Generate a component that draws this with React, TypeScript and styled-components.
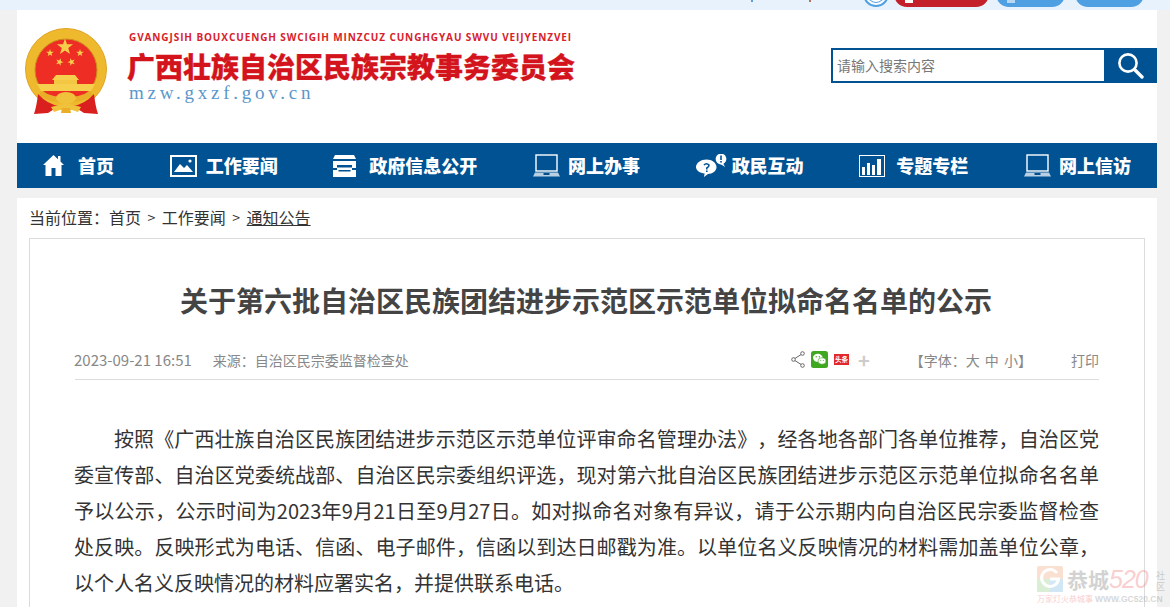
import React from "react";
import styled, { createGlobalStyle } from "styled-components";

const CJK = `"Noto Sans CJK SC", "Noto Sans", sans-serif`;
const BLUE = "#005293";

const Global = createGlobalStyle`
  html, body { margin: 0; padding: 0; height: 607px; overflow: hidden; background: #f1f1f1; }
  body { font-family: ${CJK}; }
  * { box-sizing: border-box; }
`;

const Page = styled.div`
  position: relative;
  height: 607px;
  overflow: hidden;
`;

const TopBar = styled.div`
  height: 10px;
  background: #e8f2fd;
  overflow: hidden;
  display: flex;
  align-items: flex-end;
  padding: 0 25px 3px 751px;
`;

const TopTick = styled.span<{ $mr: number; $c: string }>`
  width: 2px;
  height: 2px;
  margin-right: ${(p) => p.$mr}px;
  background: ${(p) => p.$c};
  align-self: flex-start;
`;

const TopCircle = styled.span`
  width: 26px;
  height: 26px;
  flex: none;
  border-radius: 50%;
  background: #fff;
  border: 2px solid #4f9fe3;
  box-shadow: inset 0 0 0 2px #fff, inset 0 0 0 3px #4f9fe3;
  margin-right: 5px;
`;

const TopPill = styled.span<{ $w: number; $c: string; $mr: number }>`
  position: relative;
  width: ${(p) => p.$w}px;
  height: 26px;
  flex: none;
  border-radius: 13px;
  background: ${(p) => p.$c};
  margin-right: ${(p) => p.$mr}px;
  &::after {
    content: "";
    position: absolute;
    left: 11px;
    bottom: 4px;
    width: 8px;
    height: 3px;
    background: #fff;
    opacity: ${(p) => (p.$w === 95 ? 1 : 0.6)};
  }
`;

const PlainPill = styled(TopPill)`
  &::after {
    display: none;
  }
`;

const Shell = styled.div`
  width: 1140px;
  margin-left: 17px;
`;

const Header = styled.header`
  height: 133px;
  background: #fff;
  display: flex;
  align-items: flex-start;
  padding: 18px 0 0 8px;
`;

const Emblem = styled.svg`
  width: 82px;
  height: 90px;
  flex: none;
`;

const Brand = styled.div`
  margin-left: 22px;
  display: flex;
  flex-direction: column;
  width: 460px;
`;

const BrandLatin = styled.div`
  font-family: "Open Sans", "Liberation Sans", sans-serif;
  font-size: 10px;
  font-weight: 700;
  line-height: 14px;
  letter-spacing: 0.9px;
  color: #d7222b;
  white-space: nowrap;
  margin-top: 2px;
`;

const BrandTitle = styled.div`
  font-size: 28px;
  font-weight: 900;
  line-height: 32px;
  color: #d3141c;
  margin: 6px 0 0 -2px;
  white-space: nowrap;
  -webkit-text-stroke: 0.3px #d3141c;
`;

const BrandUrl = styled.div`
  font-family: "Liberation Serif", serif;
  font-size: 19px;
  line-height: 22px;
  letter-spacing: 3.75px;
  color: #5a97c9;
  white-space: nowrap;
`;

const Search = styled.div`
  margin-left: auto;
  margin-top: 20px;
  width: 326px;
  height: 35px;
  display: flex;
  border: 2px solid ${BLUE};
  border-right: 0;
  background: #fff;
`;

const SearchHint = styled.div`
  flex: 1;
  font-size: 14px;
  line-height: 31px;
  padding-left: 4px;
  color: #777;
`;

const SearchButton = styled.div`
  width: 53px;
  background: ${BLUE};
  display: flex;
  align-items: center;
  justify-content: center;
`;

const Nav = styled.nav`
  height: 45px;
  background: ${BLUE};
  display: flex;
  align-items: center;
  justify-content: space-between;
  padding: 0 26px;
`;

const NavItem = styled.a<{ $gap: number }>`
  display: flex;
  align-items: center;
  gap: ${(p) => p.$gap}px;
  color: #fff;
  font-size: 18px;
  font-weight: 900;
  line-height: 45px;
  white-space: nowrap;
`;

const Content = styled.main`
  margin-top: 10px;
  background: #fff;
  padding: 0 12px;
  height: 420px;
`;

const Crumbs = styled.div`
  height: 40px;
  padding-bottom: 2px;
  display: flex;
  align-items: center;
  font-size: 16px;
  color: #333;
  white-space: nowrap;
  text-spacing-trim: space-all;
`;

const CrumbSep = styled.span`
  margin: 0 6.5px;
  font-size: 14px;
`;

const CrumbCurrent = styled.span`
  text-decoration: underline;
`;

const Card = styled.article`
  border: 1px solid #dcdcdc;
  padding: 0 45px;
  height: 400px;
`;

const Title = styled.h1`
  margin: 0;
  padding: 40px 2px 0 0;
  font-size: 28px;
  font-weight: 700;
  line-height: 42px;
  text-align: center;
  color: #444;
`;

const Meta = styled.div`
  margin-top: 21px;
  height: 38px;
  padding-bottom: 2px;
  display: flex;
  align-items: center;
  border-bottom: 1px solid #dcdcdc;
  font-size: 14px;
  color: #888;
  text-spacing-trim: space-all;
`;

const MetaDate = styled.span`
  font-size: 15px;
  margin: 0 21px 0 -1px;
`;

const MetaSource = styled.span`
  font-size: 14px;
`;

const ShareIcons = styled.div`
  margin-left: auto;
  display: flex;
  align-items: center;
  gap: 6px;
`;

const Plus = styled.span`
  font-size: 20px;
  line-height: 18px;
  font-weight: 700;
  color: #ccc;
  margin-left: 3px;
`;

const FontTools = styled.span`
  margin-left: 40px;
  font-size: 14px;
  word-spacing: 2px;
`;

const PrintLink = styled.span`
  margin-left: 39px;
  font-size: 14px;
`;

const Body = styled.p`
  margin: 41px 0 0 -1px;
  font-size: 20px;
  line-height: 36px;
  text-indent: 40px;
  text-align: justify;
  color: #333;
  text-spacing-trim: space-all;
`;

const Watermark = styled.div`
  position: absolute;
  right: 5px;
  bottom: 3px;
  width: 128px;
  height: 38px;
  opacity: 0.32;
  display: grid;
  grid-template-columns: 26px 1fr 9px;
  grid-template-rows: 27px 11px;
  column-gap: 4px;
`;

const MarkMain = styled.div`
  display: flex;
  align-items: center;
  font-size: 21px;
  line-height: 27px;
  font-weight: 700;
  color: #777;
  white-space: nowrap;
`;

const MarkNum = styled.span`
  font-family: "Liberation Sans", sans-serif;
  font-style: italic;
  font-weight: 400;
  font-size: 25px;
  line-height: 27px;
  color: #ee6d70;
  letter-spacing: -1px;
`;

const MarkSide = styled.div`
  font-size: 9px;
  line-height: 11px;
  color: #777;
  padding-top: 4px;
`;

const MarkFoot = styled.div`
  grid-column: 1 / span 3;
  font-size: 8px;
  line-height: 11px;
  white-space: nowrap;
  color: #e66;
`;

const MarkFootUrl = styled.span`
  font-family: "Liberation Sans", sans-serif;
  font-weight: 700;
  font-size: 8.5px;
  color: #888;
  margin-left: 2px;
`;

const EmblemArt = () => {
  const star = (cx: number, cy: number, r: number, rot = 0) => {
    const pts: string[] = [];
    for (let i = 0; i < 10; i++) {
      const a = ((-90 + rot + i * 36) * Math.PI) / 180;
      const rr = i % 2 ? r * 0.4 : r;
      pts.push(`${(cx + rr * Math.cos(a)).toFixed(2)},${(cy + rr * Math.sin(a)).toFixed(2)}`);
    }
    return <polygon points={pts.join(" ")} fill="#f6cf4a" />;
  };
  return (
    <Emblem viewBox="0 0 82 90">
      <circle cx="41" cy="41" r="40.5" fill="#efb92e" stroke="#dfa324" strokeWidth="1" />
      <circle cx="41" cy="42" r="31" fill="#ee2d24" stroke="#c98f1a" strokeWidth="1" />
      {star(40, 19, 8.5)}
      {star(25, 25, 4)}
      {star(55, 25, 4)}
      {star(34.5, 34, 4, 20)}
      {star(46.5, 34, 4, -20)}
      <path d="M31 47 H50 L54 52 H27 Z" fill="#f6cf4c" />
      <rect x="29" y="52" width="23" height="4" fill="#f3c644" />
      <path d="M12 56 H70 L66 63 H16 Z" fill="#f6cf4c" />
      <path d="M16 63 Q41 76 66 63 L68 68 Q41 82 14 68 Z" fill="#e9ad27" />
      <path d="M13 66 C12 74 11 80 9 86 L23 85 L34 78 Q22 76 13 66 Z" fill="#d9201f" />
      <path d="M69 66 C70 74 71 80 73 86 L59 85 L48 78 Q60 76 69 66 Z" fill="#d9201f" />
      <ellipse cx="41" cy="70" rx="10" ry="6" fill="#f0c23c" />
      <path d="M26 79 L38 76 H44 L56 79 L53 84 L44 81 H38 L29 84 Z" fill="#f0c23c" />
      <path d="M37 80 H45 L46 85 H36 Z" fill="#e9ad27" />
    </Emblem>
  );
};

const HomeIcon = () => (
  <svg width="21" height="21" viewBox="0 0 21 21" fill="#fff">
    <path d="M10.5 0 L15 4.2 V1 H17.5 V6.6 L21 10 H18.5 V21 H12.5 V13 H8.5 V21 H2.5 V10 H0 Z" />
  </svg>
);

const PictureIcon = () => (
  <svg width="27" height="22" viewBox="0 0 27 22">
    <rect x="1" y="1" width="25" height="20" fill="none" stroke="#fff" strokeWidth="2" />
    <path d="M4 17 L10 9 L14 13 L17 10 L23 17 Z" fill="#fff" />
    <circle cx="20" cy="6" r="1.6" fill="#fff" />
  </svg>
);

const PrinterIcon = () => (
  <svg width="23" height="22" viewBox="0 0 23 22" fill="#fff">
    <path d="M2 0 H21 L23 4 H0 Z" />
    <path d="M0 6 H23 V13 H19 V10 H4 V13 H0 Z" />
    <path d="M0 15 H4 V12.5 H19 V15 H23 V22 H0 Z M5.5 15 V16.5 H17.5 V15 Z" />
  </svg>
);

const LaptopIcon = () => (
  <svg width="27" height="23" viewBox="0 0 27 23">
    <rect x="3" y="1" width="21" height="16" fill="none" stroke="#fff" strokeWidth="1.4" />
    <path d="M2 18.5 H25 L27 22.5 H0 Z" fill="#b9cfe3" />
    <rect x="10.5" y="19" width="6" height="2" fill="#00508f" />
  </svg>
);

const ChatIcon = () => (
  <svg width="31" height="23" viewBox="0 0 31 23">
    <path d="M10.5 5.5 C16 5.5 20.5 9 20.5 13 C20.5 17 16.5 20 12 20 L8 23 L8.6 19.6 C4 19 0 16.5 0 13 C0 9 5 5.5 10.5 5.5 Z" fill="#fff" />
    <circle cx="25" cy="5" r="5.4" fill="#fff" />
    <path d="M27 9 L29 13 L24.5 10 Z" fill="#fff" />
    <path d="M8 11 Q10.5 8.5 13 11 Q13 13 10.8 14 V15.5 M10.8 16.5 V18" fill="none" stroke={BLUE} strokeWidth="1.6" />
    <rect x="24.2" y="1.5" width="1.6" height="4.5" fill={BLUE} />
    <rect x="24.2" y="7" width="1.6" height="1.6" fill={BLUE} />
  </svg>
);

const ChartIcon = () => (
  <svg width="26" height="22" viewBox="0 0 26 22" fill="#fff">
    <rect x="0.5" y="0.5" width="25" height="21" fill="none" stroke="#fff" />
    <rect x="3" y="12" width="3" height="8" />
    <rect x="8" y="8" width="3" height="12" />
    <rect x="13" y="10" width="3" height="10" />
    <rect x="18" y="4" width="4" height="16" />
  </svg>
);

const ShareIcon = () => (
  <svg width="14" height="17" viewBox="0 0 14 17" fill="none" stroke="#666" strokeWidth="1">
    <circle cx="2.5" cy="8.5" r="1.8" />
    <circle cx="11.5" cy="2.5" r="1.8" />
    <circle cx="11.5" cy="14.5" r="1.8" />
    <path d="M4 7.4 L10 3.6 M4 9.6 L10 13.4" />
  </svg>
);

const WechatIcon = () => (
  <svg width="17" height="17" viewBox="0 0 17 17">
    <rect width="17" height="17" rx="2.5" fill="#3fa821" />
    <ellipse cx="6.8" cy="6.8" rx="4.8" ry="4" fill="#fff" />
    <ellipse cx="11" cy="10" rx="4" ry="3.3" fill="#fff" stroke="#3fa821" strokeWidth="0.6" />
    <circle cx="5.2" cy="5.8" r="0.7" fill="#3fa821" />
    <circle cx="8.4" cy="5.8" r="0.7" fill="#3fa821" />
    <circle cx="9.8" cy="9.5" r="0.5" fill="#3fa821" />
    <circle cx="12.3" cy="9.5" r="0.5" fill="#3fa821" />
  </svg>
);

const ToutiaoIcon = () => (
  <svg width="15" height="11" viewBox="0 0 15 11">
    <rect width="15" height="11" fill="#e3262b" />
    <text x="7.5" y="8.2" fontSize="6.6" fontWeight="700" textAnchor="middle" fill="#fff" fontFamily="Noto Sans CJK SC">头条</text>
  </svg>
);

const SearchIcon = () => (
  <svg width="27" height="27" viewBox="0 0 27 27" fill="none" stroke="#fff">
    <circle cx="11" cy="11" r="8.6" strokeWidth="2.6" />
    <path d="M17.5 17.5 L25 25" strokeWidth="3.4" strokeLinecap="round" />
  </svg>
);

const MarkLogo = () => (
  <svg width="26" height="26" viewBox="0 0 26 26">
    <rect width="26" height="26" rx="2" fill="#f0a070" />
    <path d="M13 13 H26 V26 H13 Z" fill="#72b8e2" />
    <path d="M0 13 H13 V26 H0 Z" fill="#8fcb82" />
    <path d="M20 7 A8.5 8.5 0 1 0 21.5 13 H13" fill="none" stroke="#fff" strokeWidth="3" />
  </svg>
);

const navItems: { label: string; gap: number; icon: React.ReactNode }[] = [
  { label: "首页", gap: 14, icon: <HomeIcon /> },
  { label: "工作要闻", gap: 9, icon: <PictureIcon /> },
  { label: "政府信息公开", gap: 13, icon: <PrinterIcon /> },
  { label: "网上办事", gap: 8, icon: <LaptopIcon /> },
  { label: "政民互动", gap: 5, icon: <ChatIcon /> },
  { label: "专题专栏", gap: 11, icon: <ChartIcon /> },
  { label: "网上信访", gap: 8, icon: <LaptopIcon /> },
];

export default function App() {
  return (
    <Page>
      <Global />
      <TopBar>
        <TopTick $mr={56} $c="#5b9bd8" />
        <TopTick $mr={52} $c="#b4735a" />
        <TopCircle />
        <TopPill $w={95} $c="#c4202b" $mr={7} />
        <TopPill $w={69} $c="#4f9fe3" $mr={10} />
        <PlainPill $w={69} $c="#4f9fe3" $mr={0} />
      </TopBar>
      <Shell>
        <Header>
          <EmblemArt />
          <Brand>
            <BrandLatin>GVANGJSIH BOUXCUENGH SWCIGIH MINZCUZ CUNGHGYAU SWVU VEIJYENZVEI</BrandLatin>
            <BrandTitle>广西壮族自治区民族宗教事务委员会</BrandTitle>
            <BrandUrl>mzw.gxzf.gov.cn</BrandUrl>
          </Brand>
          <Search>
            <SearchHint>请输入搜索内容</SearchHint>
            <SearchButton>
              <SearchIcon />
            </SearchButton>
          </Search>
        </Header>
        <Nav>
          {navItems.map((n) => (
            <NavItem key={n.label} $gap={n.gap}>
              {n.icon}
              {n.label}
            </NavItem>
          ))}
        </Nav>
        <Content>
          <Crumbs>
            当前位置：首页
            <CrumbSep>&gt;</CrumbSep>
            工作要闻
            <CrumbSep>&gt;</CrumbSep>
            <CrumbCurrent>通知公告</CrumbCurrent>
          </Crumbs>
          <Card>
            <Title>关于第六批自治区民族团结进步示范区示范单位拟命名名单的公示</Title>
            <Meta>
              <MetaDate>2023-09-21 16:51</MetaDate>
              <MetaSource>来源：自治区民宗委监督检查处</MetaSource>
              <ShareIcons>
                <ShareIcon />
                <WechatIcon />
                <ToutiaoIcon />
                <Plus>+</Plus>
              </ShareIcons>
              <FontTools>【字体：大 中 小】</FontTools>
              <PrintLink>打印</PrintLink>
            </Meta>
            <Body>
              按照《广西壮族自治区民族团结进步示范区示范单位评审命名管理办法》，经各地各部门各单位推荐，自治区党委宣传部、自治区党委统战部、自治区民宗委组织评选，现对第六批自治区民族团结进步示范区示范单位拟命名名单予以公示，公示时间为2023年9月21日至9月27日。如对拟命名对象有异议，请于公示期内向自治区民宗委监督检查处反映。反映形式为电话、信函、电子邮件，信函以到达日邮戳为准。以单位名义反映情况的材料需加盖单位公章，以个人名义反映情况的材料应署实名，并提供联系电话。
            </Body>
          </Card>
        </Content>
      </Shell>
      <Watermark>
        <MarkLogo />
        <MarkMain>
          恭城<MarkNum>520</MarkNum>
        </MarkMain>
        <MarkSide>社区</MarkSide>
        <MarkFoot>
          万家灯火恭城事<MarkFootUrl>WWW.GC520.CN</MarkFootUrl>
        </MarkFoot>
      </Watermark>
    </Page>
  );
}
